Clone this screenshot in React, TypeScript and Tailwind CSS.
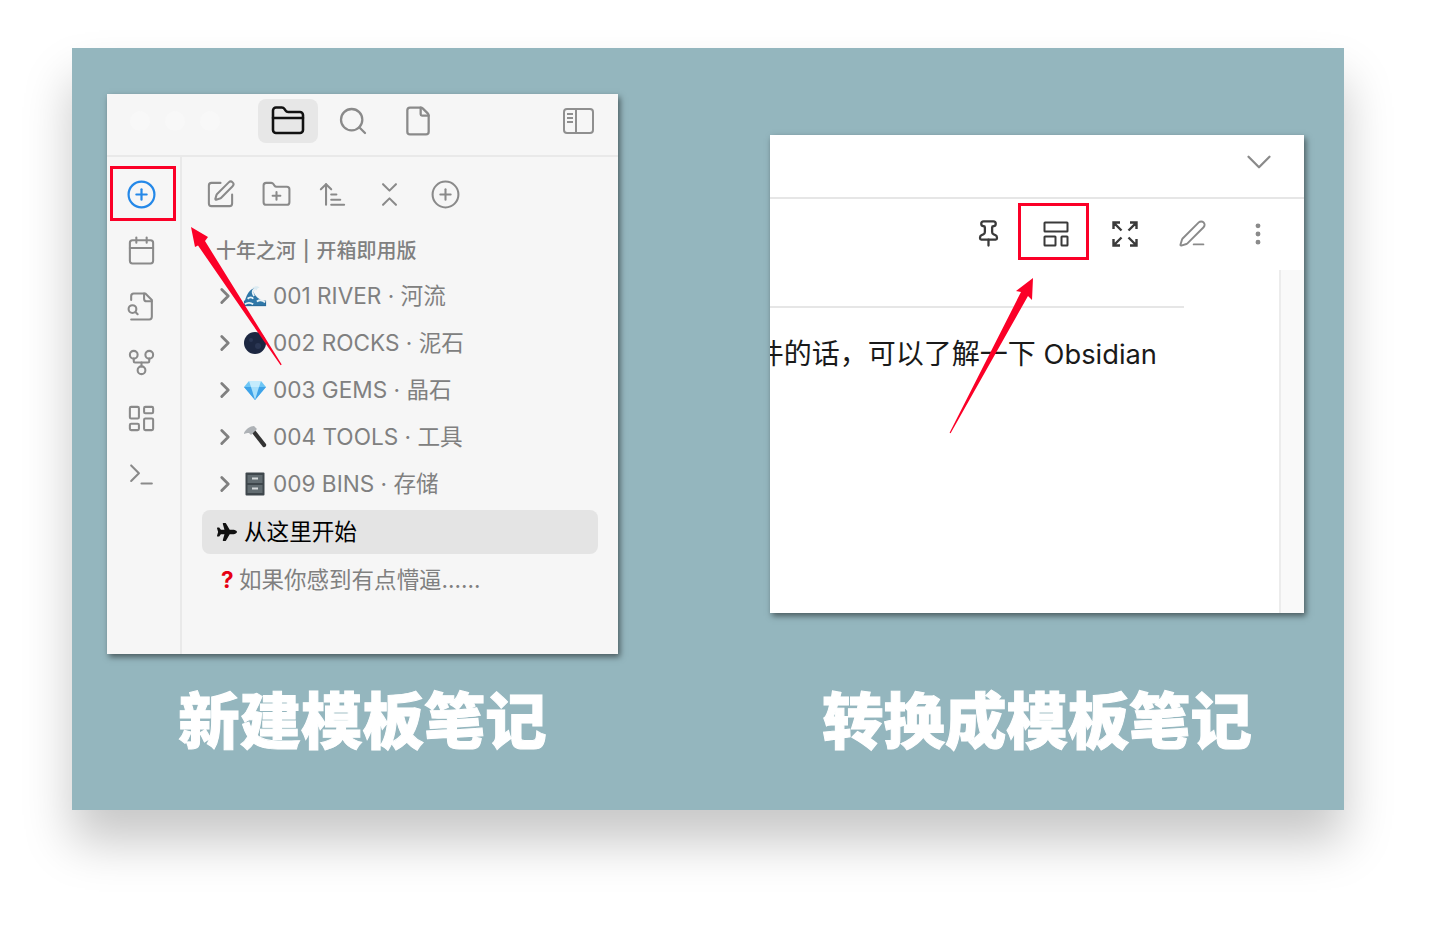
import {
  ArrowUpNarrowWide,
  Calendar,
  ChevronDown,
  ChevronRight,
  ChevronsDownUp,
  CirclePlus,
  EllipsisVertical,
  File,
  FolderClosed,
  FolderPlus,
  GitFork,
  LayoutDashboard,
  PenLine,
  Pin,
  Search,
  SquarePen,
  Terminal,
} from "lucide-react";
import { FaPlane } from "react-icons/fa";

const sans = "font-['Inter','Noto_Sans_CJK_SC',sans-serif]";

function WaveEmoji() {
  return (
    <svg width="26" height="24" viewBox="0 0 26 24">
      <rect x="1" y="17" width="24" height="6" fill="#2a6796" />
      <path d="M1 22C3 10 8 3 15 3c-3 2-4 4-3 6 2 4 5 6 10 9l3 4z" fill="#2f77a8" />
      <path d="M13 4c-3 2-3 5-1 8M5 15c2-2 5-2 6 0M15 18c3-2 6-2 9 1M2 21c3-2 6-2 9 0" stroke="#e8f2f6" strokeWidth="2" fill="none" />
      <path d="M10 3c3-2 6-2 8 0-2 0-3 1-3 3-2-2-3-2-5-3z" fill="#dcebf2" />
    </svg>
  );
}

function MoonEmoji() {
  return (
    <svg width="24" height="24" viewBox="0 0 24 24">
      <circle cx="12" cy="12" r="11" fill="#1c2741" />
      <circle cx="8" cy="9" r="2" fill="#2a3653" />
      <circle cx="15" cy="15" r="3" fill="#2a3653" />
    </svg>
  );
}

function GemEmoji() {
  return (
    <svg width="24" height="22" viewBox="0 0 24 22">
      <path d="M6 2h12l5 6-11 13L1 8z" fill="#6ec6f5" />
      <path d="M1 8h22L12 21z" fill="#3fa3e8" />
      <path d="M8 8l4 13 4-13z" fill="#a7e0fb" />
      <path d="M6 2l2 6h8l2-6z" fill="#c4ecfd" />
    </svg>
  );
}

function HammerEmoji() {
  return (
    <svg width="24" height="24" viewBox="0 0 24 24">
      <path d="M9 8l3-3 11 14c1 2-1 4-3 3z" fill="#333" />
      <path d="M1 8c2-4 6-7 10-7l3 3-6 6-2-2c-2 0-3 0-5 1z" fill="#aeb2b6" />
    </svg>
  );
}

function CabinetEmoji() {
  return (
    <svg width="20" height="24" viewBox="0 0 20 24">
      <rect x="0.5" y="0.5" width="19" height="23" rx="1" fill="#3f474c" />
      <rect x="2.5" y="3" width="15" height="8" fill="#626c71" />
      <rect x="2.5" y="13" width="15" height="8" fill="#626c71" />
      <rect x="7" y="5.5" width="6" height="2" fill="#d5d9db" />
      <rect x="7" y="15.5" width="6" height="2" fill="#d5d9db" />
    </svg>
  );
}

function SidebarToggle() {
  return (
    <svg width="32" height="28" viewBox="0 0 32 28" fill="none" stroke="#8f8f8f" strokeWidth="2">
      <rect x="2" y="2" width="29" height="24" rx="3" />
      <path d="M14 2v24M5 7h6M5 11h6M5 15h6" />
    </svg>
  );
}

function FileSearchIcon() {
  return (
    <svg width="31" height="31" viewBox="0 0 24 24" fill="none" stroke="#8a8a8a" strokeWidth="1.6" strokeLinecap="round" strokeLinejoin="round">
      <path d="M4 22h14a2 2 0 0 0 2-2V7l-5-5H6a2 2 0 0 0-2 2v3" />
      <path d="M14 2v4a2 2 0 0 0 2 2h4" />
      <path d="m9 18-1.5-1.5" />
      <circle cx="5" cy="14" r="3" />
    </svg>
  );
}

function LayoutIcon() {
  return (
    <svg width="30" height="28" viewBox="0 0 30 28" fill="none" stroke="#3a3a3a" strokeWidth="2">
      <rect x="3.5" y="2.5" width="23" height="9" rx="0.5" />
      <rect x="3.5" y="16.5" width="11" height="9" rx="0.5" />
      <rect x="20.5" y="16.5" width="6" height="9" rx="0.5" />
    </svg>
  );
}

function ExpandIcon() {
  return (
    <svg width="28" height="28" viewBox="0 0 28 28" fill="none" stroke="#3a3a3a" strokeWidth="2.4">
      <path d="M2.5 9V2.5H9M2.5 2.5l8 8M19 2.5h6.5V9M25.5 2.5l-8 8M2.5 19v6.5H9M2.5 25.5l8-8M25.5 19v6.5H19M25.5 25.5l-8-8" />
    </svg>
  );
}

const toolIcons = [SquarePen, FolderPlus, ArrowUpNarrowWide, ChevronsDownUp, CirclePlus];

const folders = [
  { emoji: <WaveEmoji />, name: "001 RIVER · 河流" },
  { emoji: <MoonEmoji />, name: "002 ROCKS · 泥石" },
  { emoji: <GemEmoji />, name: "003 GEMS · 晶石" },
  { emoji: <HammerEmoji />, name: "004 TOOLS · 工具" },
  { emoji: <CabinetEmoji />, name: "009 BINS · 存储" },
];

function FileExplorer() {
  return (
    <div className={`relative w-[511px] h-[560px] bg-[#f6f6f6] shadow-[2px_3px_6px_rgba(0,0,0,0.5)] flex flex-col ${sans}`}>
      <div className="h-[63px] border-b-2 border-[#e9e9e9] flex items-center shrink-0 pb-[7px]">
        <div className="flex gap-[15px] ml-[23px] mr-[38px]">
          <span className="w-5 h-5 rounded-full bg-[#f8f8f8]" />
          <span className="w-5 h-5 rounded-full bg-[#f8f8f8]" />
          <span className="w-5 h-5 rounded-full bg-[#f8f8f8]" />
        </div>
        <div className="w-[60px] h-[44px] rounded-lg bg-[#e7e7e7] flex items-center justify-center">
          <FolderClosed size={36} strokeWidth={1.7} color="#111" />
        </div>
        <Search size={32} strokeWidth={1.7} color="#8a8a8a" className="ml-[19px]" />
        <File size={32} strokeWidth={1.7} color="#8a8a8a" className="ml-[33px]" />
        <span className="ml-auto mr-[24px]"><SidebarToggle /></span>
      </div>

      <div className="flex flex-1 min-h-0">
        <div className="w-[75px] shrink-0 border-r-2 border-[#e9e9e9] pt-[9px] flex flex-col items-center pr-[5px]">
          <div className="h-14 flex items-center">
            <CirclePlus size={31} strokeWidth={1.7} color="#2488e8" />
          </div>
          <div className="h-14 flex items-center">
            <Calendar size={31} strokeWidth={1.6} color="#8a8a8a" />
          </div>
          <div className="h-14 flex items-center">
            <FileSearchIcon />
          </div>
          <div className="h-14 flex items-center">
            <GitFork size={31} strokeWidth={1.6} color="#8a8a8a" />
          </div>
          <div className="h-14 flex items-center">
            <LayoutDashboard size={31} strokeWidth={1.6} color="#8a8a8a" />
          </div>
          <div className="h-14 flex items-center">
            <Terminal size={31} strokeWidth={1.6} color="#8a8a8a" />
          </div>
        </div>

        <div className="flex-1 pl-[20px] pr-[20px] pt-[9px]">
          <div className="flex h-14 -ml-[10px]">
            {toolIcons.map((Icon, i) => (
              <div key={i} className="w-[56.4px] flex items-center justify-center">
                <Icon size={31} strokeWidth={1.6} color="#8a8a8a" />
              </div>
            ))}
          </div>

          <div className="h-[50px] pt-[7px] pl-[14px] flex items-center text-[20px] font-medium [word-spacing:1.5px] text-[#808080] whitespace-nowrap">
            十年之河 | 开箱即用版
          </div>

          {folders.map((f) => (
            <div key={f.name} className="h-[47px] flex items-center pl-[12px] whitespace-nowrap">
              <ChevronRight size={26} strokeWidth={2.6} color="#808080" className="-ml-[2px] shrink-0" />
              <span className="w-[30px] ml-[5px] shrink-0 flex justify-center pr-[6px]">{f.emoji}</span>
              <span className="text-[22.6px] text-[#808080]">{f.name}</span>
            </div>
          ))}

          <div className="h-[44px] mt-[3px] rounded-lg bg-[#e4e4e4] flex items-center pl-[15px] text-[22.6px] text-black whitespace-nowrap">
            <span className="w-[27px] shrink-0"><FaPlane size={20} color="#111" /></span>
            从这里开始
          </div>

          <div className="h-[52px] flex items-center pl-[19px] text-[22.5px] text-[#808080] whitespace-nowrap">
            <span className="w-[18px] text-[#e60012] font-bold">?</span>
            如果你感到有点懵逼......
          </div>
        </div>
      </div>

      <div className="absolute left-[3px] top-[72px] w-[66px] h-[55px] border-[3px] border-[#fb0027]" />
    </div>
  );
}

function NoteView() {
  return (
    <div className={`relative w-[534px] h-[478px] bg-white shadow-[2px_3px_6px_rgba(0,0,0,0.5)] flex flex-col overflow-hidden ${sans}`}>
      <div className="h-[64px] border-b-2 border-[#e6e6e6] flex items-center justify-end pr-[24px] pb-[8px] shrink-0">
        <ChevronDown size={42} strokeWidth={1.3} color="#8a8a8a" />
      </div>
      <div className="h-[71px] flex items-center justify-end shrink-0 pr-[32px] pb-[2px]">
        <Pin size={29} strokeWidth={1.9} color="#3a3a3a" className="mr-[38px]" />
        <span className="mr-[39.5px]"><LayoutIcon /></span>
        <span className="mr-[39.5px]"><ExpandIcon /></span>
        <PenLine size={29} strokeWidth={1.6} color="#8a8a8a" className="mr-[37px]" />
        <EllipsisVertical size={28} strokeWidth={2.2} color="#8a8a8a" />
      </div>
      <div className="flex flex-1 min-h-0">
        <div className="flex-1 min-w-0 overflow-hidden">
          <div className="mt-[36px] w-[414px] h-[2px] bg-[#e6e6e6]" />
          <div className="flex justify-end pr-[122px] mt-[26px] text-[28px] leading-[40px] text-[#1a1a1a] whitespace-nowrap">
            <span>件的话，可以了解一下 <span className="text-[27.3px]">Obsidian</span></span>
          </div>
        </div>
        <div className="w-[25px] shrink-0 border-l-2 border-[#ececec] bg-[#f9f9f9]" />
      </div>
      <div className="absolute left-[248px] top-[68px] w-[71px] h-[57px] border-[3px] border-[#fb0027]" />
    </div>
  );
}

function Caption({ text }: { text: string }) {
  return (
    <div className="h-[134px] pb-[5px] flex items-center justify-center text-white text-[61.4px] font-black font-['Noto_Sans_CJK_SC',sans-serif] [-webkit-text-stroke:1px_white] whitespace-nowrap">
      {text}
    </div>
  );
}

export default function App() {
  return (
    <div className="relative w-[1434px] h-[944px] bg-white overflow-hidden pt-[48px] pl-[72px]">
      <div className="w-[1272px] h-[762px] bg-[#94b6be] shadow-[0_32px_46px_rgba(0,0,0,0.22)] flex pl-[35px] pt-[46px]">
        <div className="w-[511px]">
          <FileExplorer />
          <Caption text="新建模板笔记" />
        </div>
        <div className="w-[534px] ml-[152px] pt-[41px]">
          <NoteView />
          <div className="mt-[41px]">
            <Caption text="转换成模板笔记" />
          </div>
        </div>
      </div>

      {/* the two annotation arrows sit over both windows */}
      <svg className="absolute left-0 top-0 pointer-events-none" width="1434" height="944" viewBox="0 0 1434 944">
        <polygon points="191,227 208,237 205,241 281.7,364.6 280.6,365.2 198,245.5 195,247" fill="#fb0027" />
        <polygon points="1033,278 1032,300 1028,296 950.6,433.3 949.6,432.7 1021,292 1016,291" fill="#fb0027" />
      </svg>
    </div>
  );
}
